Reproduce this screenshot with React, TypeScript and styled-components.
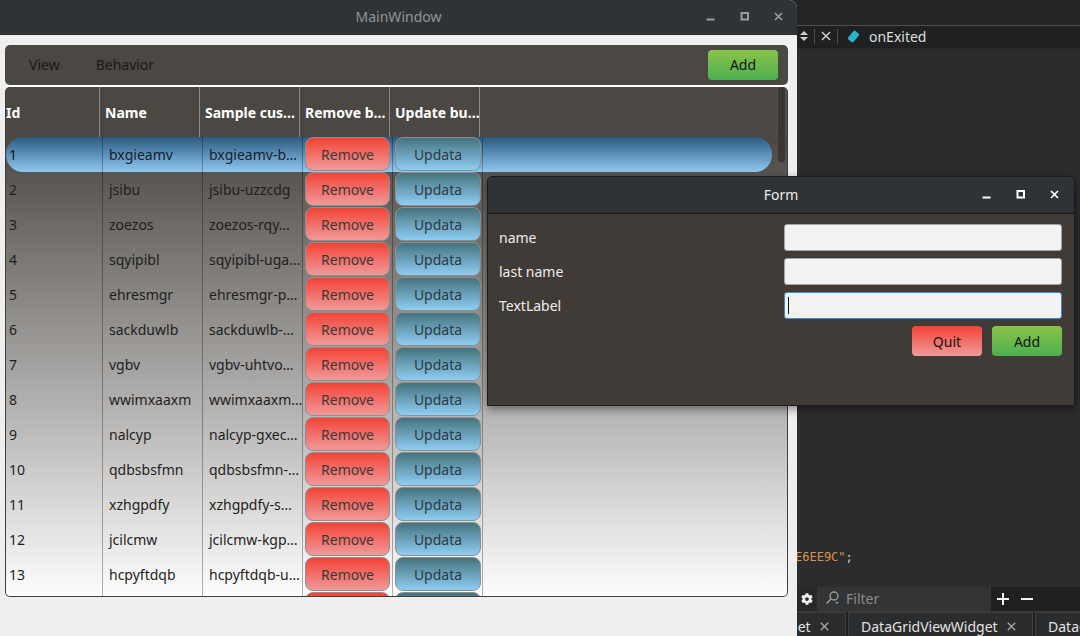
import React from "react";
import styled, { createGlobalStyle } from "styled-components";
import { FaCog } from "react-icons/fa";

const GlobalStyle = createGlobalStyle`
  * { box-sizing: border-box; }
  html, body { margin: 0; padding: 0; background: #232425; }
  body { font-family: "Noto Sans", "DejaVu Sans", sans-serif; font-size: 14px; }
`;

const Desktop = styled.div`
  position: relative;
  display: flex;
  width: 1080px;
  height: 636px;
  overflow: hidden;
  background: #232425;
`;

/* ---------- window chrome ---------- */
const TitleBar = styled.div<{ $h: number; $active?: boolean }>`
  height: ${(p) => p.$h}px;
  flex: none;
  display: grid;
  grid-template-columns: 1fr auto 1fr;
  align-items: center;
  padding-bottom: 1px;
  background: #2f3336;
  color: ${(p) => (p.$active ? "#ececec" : "#909396")};
  border-bottom: 1px solid ${(p) => (p.$active ? "#161819" : "#2a2d2f")};
`;

const TitleText = styled.div`
  grid-column: 2;
  font-size: 14px;
`;

const Controls = styled.div<{ $gap: number; $pr: number }>`
  grid-column: 3;
  justify-self: end;
  display: flex;
  align-items: center;
  gap: ${(p) => p.$gap}px;
  padding-right: ${(p) => p.$pr}px;
  svg {
    display: block;
  }
`;

const WinControls = ({ color, gap, pr }: { color: string; gap: number; pr: number }) => (
  <Controls $gap={gap} $pr={pr}>
    <svg width="9" height="9" viewBox="0 0 9 9">
      <rect x="0.5" y="6.5" width="8" height="2" fill={color} />
    </svg>
    <svg width="9" height="9" viewBox="0 0 9 9">
      <rect x="1.5" y="1" width="6.5" height="6.5" fill="none" stroke={color} strokeWidth="2" />
    </svg>
    <svg width="9" height="9" viewBox="0 0 9 9">
      <path d="M1 1L8 8M8 1L1 8" stroke={color} strokeWidth="1.7" />
    </svg>
  </Controls>
);

/* ---------- main window ---------- */
const MainWindow = styled.div`
  flex: none;
  width: 797px;
  height: 636px;
  display: flex;
  flex-direction: column;
  background: #efefef;
  border-top-right-radius: 8px;
  overflow: hidden;
`;

const MainBody = styled.div`
  flex: 1;
  display: flex;
  flex-direction: column;
  padding: 10px 9px 0 5px;
`;

const ToolBar = styled.div`
  height: 40px;
  flex: none;
  display: flex;
  align-items: center;
  gap: 36px;
  padding: 0 10px 1px 24px;
  background: #4b4743;
  border-radius: 5px;
`;

const MenuItem = styled.span`
  color: #1a1a1a;
  font-size: 14px;
`;

const GradButton = styled.button<{ $kind: "green" | "red" }>`
  width: 70px;
  height: 30px;
  border: none;
  border-radius: 4px;
  font-family: inherit;
  font-size: 14px;
  color: #151515;
  padding: 0;
  background: ${(p) =>
    p.$kind === "green"
      ? "linear-gradient(180deg, #8bc34a 0%, #4caf50 100%)"
      : "linear-gradient(180deg, #f44336 0%, #ef9a9a 100%)"};
`;

const ToolAdd = styled(GradButton)`
  margin-left: auto;
`;

const Divider = styled.div`
  height: 2px;
  flex: none;
  background: #ffffff;
`;

const Table = styled.div`
  position: relative;
  height: 510px;
  flex: none;
  display: flex;
  flex-direction: column;
  background: #55504b;
  border: 1px solid rgba(0, 0, 0, 0.22);
  border-top: none;
  border-radius: 5px;
  overflow: hidden;
`;

const HeaderRow = styled.div`
  height: 50px;
  flex: none;
  display: grid;
  grid-template-columns: 94px 100px 100px 90px 90px 1fr;
  margin-right: 10px;
  background: #4b4743;
  border-bottom-right-radius: 6px;
`;

const HeaderCell = styled.div<{ $pl?: number; $last?: boolean }>`
  display: flex;
  align-items: center;
  padding-left: ${(p) => p.$pl ?? 5}px;
  color: #ffffff;
  font-weight: 700;
  font-size: 14px;
  white-space: nowrap;
  overflow: hidden;
  border-right: ${(p) => (p.$last ? "none" : "1px solid #8d8883")};
`;

const Body = styled.div`
  flex: 1;
  overflow: hidden;
  padding-right: 15px;
  background: linear-gradient(180deg, #4b4743 0%, #fdfdfd 100%);
`;

const Row = styled.div<{ $selected?: boolean }>`
  height: 35px;
  display: grid;
  grid-template-columns: 97px 100px 100px 90px 90px 1fr;
  border-radius: 17px;
  color: ${(p) => (p.$selected ? "#14202b" : "#1e1e1e")};
  background: ${(p) =>
    p.$selected ? "linear-gradient(180deg, #2b5a80 0%, #8fc8f2 100%)" : "transparent"};
`;

const Cell = styled.div<{ $pl?: number; $last?: boolean }>`
  display: flex;
  align-items: center;
  padding-left: ${(p) => p.$pl ?? 6}px;
  white-space: nowrap;
  overflow: hidden;
  font-size: 14px;
  border-right: ${(p) => (p.$last ? "none" : "1px solid rgba(0, 0, 0, 0.3)")};
`;

const ButtonCell = styled(Cell)`
  align-items: flex-start;
  padding-left: 2px;
  overflow: visible;
`;

const RowButton = styled.button<{ $kind: "remove" | "update" }>`
  width: ${(p) => (p.$kind === "remove" ? 85 : 86)}px;
  height: 34px;
  padding: 0;
  border: 1px solid #8f8f8f;
  border-radius: 8px;
  font-family: inherit;
  font-size: 14px;
  color: ${(p) => (p.$kind === "remove" ? "#3a3a3a" : "#2c3a44")};
  background: ${(p) =>
    p.$kind === "remove"
      ? "linear-gradient(180deg, #f44336 0%, #ef9a9a 100%)"
      : "linear-gradient(180deg, #45737d 0%, #8fcdf3 100%)"};
`;

const ScrollIndicator = styled.div`
  position: absolute;
  top: 0;
  right: 2px;
  width: 7px;
  height: 75px;
  border-radius: 3px;
  background: #3a3633;
`;

/* ---------- IDE pane ---------- */
const IdePane = styled.div`
  flex: 1;
  min-width: 0;
  display: flex;
  flex-direction: column;
  background: #2b2c2e;
  color: #dcdcdc;
`;

const IdeTopStrip = styled.div`
  height: 26px;
  flex: none;
  background: #232425;
  border-bottom: 1px solid #4e4f51;
`;

const EditorBar = styled.div`
  height: 23px;
  flex: none;
  display: flex;
  align-items: center;
  gap: 6px;
  padding: 0 0 2px 3px;
  background: #1f2022;
  border-bottom: 1px solid #262729;
  white-space: nowrap;
  svg {
    display: block;
    flex: none;
  }
`;

const BarSep = styled.div`
  width: 1px;
  height: 15px;
  background: #4a4b4d;
`;

const SymbolName = styled.span`
  margin-left: 3px;
  color: #dedede;
  font-size: 14px;
`;

const Editor = styled.div`
  flex: 1;
  display: flex;
  flex-direction: column;
  justify-content: flex-end;
  padding-bottom: 21px;
  overflow: hidden;
`;

const CodeLine = styled.div`
  font-family: "DejaVu Sans Mono", "Liberation Mono", monospace;
  font-size: 12px;
  line-height: 18px;
  white-space: pre;
  color: #cfcfcf;
  margin-left: -2px;
`;

const Str = styled.span`
  color: #d69545;
`;

const FilterBar = styled.div`
  height: 24px;
  flex: none;
  display: flex;
  background: #1f2021;
`;

const GearBox = styled.div`
  width: 20px;
  display: flex;
  align-items: center;
  justify-content: center;
  background: #27282a;
  color: #f0f0f0;
`;

const FilterField = styled.div`
  width: 174px;
  display: flex;
  align-items: center;
  gap: 5px;
  padding: 0 0 2px 8px;
  background: #333436;
  color: #8b8b8b;
  font-size: 14px;
  svg {
    display: block;
  }
`;

const PlusMinus = styled.div`
  display: flex;
  align-items: center;
  gap: 12px;
  padding-left: 6px;
  svg {
    display: block;
  }
`;

const DocTabs = styled.div`
  height: 25px;
  flex: none;
  display: flex;
  gap: 2px;
  background: #1e1f20;
  border-top: 1px solid #37383a;
  overflow: hidden;
`;

const DocTab = styled.div<{ $offset?: number }>`
  flex: none;
  width: 185px;
  margin-left: ${(p) => p.$offset ?? 0}px;
  display: flex;
  align-items: center;
  gap: 9px;
  padding: 3px 0 0 12px;
  background: #2b2c2e;
  border: 1px solid #3e3f41;
  border-bottom: none;
  color: #e2e2e2;
  font-size: 14px;
  white-space: nowrap;
  svg {
    display: block;
  }
`;

/* ---------- form window ---------- */
const FormWindow = styled.div`
  position: absolute;
  left: 487px;
  top: 176px;
  width: 588px;
  height: 230px;
  display: flex;
  flex-direction: column;
  border: 1px solid #1a1b1c;
  border-radius: 5px 5px 0 0;
  overflow: hidden;
  box-shadow: 0 3px 10px rgba(0, 0, 0, 0.45);
`;

const FormBody = styled.div`
  flex: 1;
  display: grid;
  grid-template-columns: 1fr 278px;
  grid-auto-rows: min-content;
  row-gap: 7px;
  align-items: center;
  padding: 10px 12px 0 11px;
  background: #403b37;
`;

const FieldLabel = styled.span`
  color: #ececec;
  font-size: 14px;
`;

const Field = styled.div<{ $focused?: boolean }>`
  height: 27px;
  display: flex;
  align-items: center;
  padding-left: 3px;
  background: #f3f3f3;
  border: 1px solid ${(p) => (p.$focused ? "#3a8bd0" : "#a4a4a4")};
  border-radius: 3px;
`;

const Caret = styled.div`
  width: 1px;
  height: 17px;
  background: #111;
`;

const FormButtons = styled.div`
  grid-column: 1 / -1;
  display: flex;
  justify-content: flex-end;
  gap: 10px;
`;

const rows: [string, string, string][] = [
  ["1", "bxgieamv", "bxgieamv-b…"],
  ["2", "jsibu", "jsibu-uzzcdg"],
  ["3", "zoezos", "zoezos-rqy…"],
  ["4", "sqyipibl", "sqyipibl-uga…"],
  ["5", "ehresmgr", "ehresmgr-p…"],
  ["6", "sackduwlb", "sackduwlb-…"],
  ["7", "vgbv", "vgbv-uhtvo…"],
  ["8", "wwimxaaxm", "wwimxaaxm…"],
  ["9", "nalcyp", "nalcyp-gxec…"],
  ["10", "qdbsbsfmn", "qdbsbsfmn-…"],
  ["11", "xzhgpdfy", "xzhgpdfy-s…"],
  ["12", "jcilcmw", "jcilcmw-kgp…"],
  ["13", "hcpyftdqb", "hcpyftdqb-u…"],
  ["", "", ""],
];

const SmallX = ({ color = "#a8a8a8", size = 9 }: { color?: string; size?: number }) => (
  <svg width={size} height={size} viewBox="0 0 9 9">
    <path d="M0.8 0.8L8.2 8.2M8.2 0.8L0.8 8.2" stroke={color} strokeWidth="1.3" />
  </svg>
);

export default function App() {
  return (
    <>
      <GlobalStyle />
      <Desktop>
        <MainWindow>
          <TitleBar $h={35}>
            <TitleText>MainWindow</TitleText>
            <WinControls color="#9a9da0" gap={25} pr={14} />
          </TitleBar>
          <MainBody>
            <ToolBar>
              <MenuItem>View</MenuItem>
              <MenuItem>Behavior</MenuItem>
              <ToolAdd $kind="green">Add</ToolAdd>
            </ToolBar>
            <Divider />
            <Table>
              <HeaderRow>
                <HeaderCell $pl={0}>Id</HeaderCell>
                <HeaderCell>Name</HeaderCell>
                <HeaderCell>Sample cus…</HeaderCell>
                <HeaderCell>Remove b…</HeaderCell>
                <HeaderCell>Update bu…</HeaderCell>
                <HeaderCell $last />
              </HeaderRow>
              <Body>
                {rows.map(([id, name, sample], i) => (
                  <Row key={i} $selected={i === 0}>
                    <Cell $pl={3}>{id}</Cell>
                    <Cell>{name}</Cell>
                    <Cell>{sample}</Cell>
                    <ButtonCell>
                      <RowButton $kind="remove">{id ? "Remove" : ""}</RowButton>
                    </ButtonCell>
                    <ButtonCell>
                      <RowButton $kind="update">{id ? "Updata" : ""}</RowButton>
                    </ButtonCell>
                    <Cell $last />
                  </Row>
                ))}
              </Body>
              <ScrollIndicator />
            </Table>
          </MainBody>
        </MainWindow>

        <IdePane>
          <IdeTopStrip />
          <EditorBar>
            <svg width="8" height="12" viewBox="0 0 8 12">
              <path d="M0 5L4 1L8 5Z M0 7L4 11L8 7Z" fill="#cfcfcf" />
            </svg>
            <BarSep />
            <SmallX color="#d0d0d0" size={10} />
            <BarSep />
            <svg width="13" height="13" viewBox="0 0 13 13" style={{ marginLeft: 3 }}>
              <rect x="3" y="1" width="7" height="11" rx="1.5" fill="#2bb3cb" transform="rotate(40 6.5 6.5)" />
            </svg>
            <SymbolName>onExited</SymbolName>
          </EditorBar>
          <Editor>
            <CodeLine>
              <Str>E6EE9C"</Str>;
            </CodeLine>
          </Editor>
          <FilterBar>
            <GearBox>
              <FaCog size={12} />
            </GearBox>
            <FilterField>
              <svg width="16" height="14" viewBox="0 0 16 14">
                <circle cx="9" cy="5" r="4" fill="none" stroke="#9a9a9a" strokeWidth="1.4" />
                <path d="M6.2 7.8L1.5 12.5" stroke="#9a9a9a" strokeWidth="1.6" />
                <path d="M10 11L14 11L12 13Z" fill="#9a9a9a" />
              </svg>
              <span>Filter</span>
            </FilterField>
            <PlusMinus>
              <svg width="12" height="12" viewBox="0 0 12 12">
                <path d="M6 0V12M0 6H12" stroke="#f2f2f2" strokeWidth="2" />
              </svg>
              <svg width="12" height="12" viewBox="0 0 12 12">
                <path d="M0 6H12" stroke="#f2f2f2" strokeWidth="2" />
              </svg>
            </PlusMinus>
          </FilterBar>
          <DocTabs>
            <DocTab $offset={-136}>
              <span>DataGridViewWidget</span>
              <SmallX />
            </DocTab>
            <DocTab>
              <span>DataGridViewWidget</span>
              <SmallX />
            </DocTab>
            <DocTab>
              <span>DataGridViewWidget</span>
              <SmallX />
            </DocTab>
          </DocTabs>
        </IdePane>

        <FormWindow>
          <TitleBar $h={37} $active>
            <TitleText>Form</TitleText>
            <WinControls color="#ffffff" gap={25} pr={15} />
          </TitleBar>
          <FormBody>
            <FieldLabel>name</FieldLabel>
            <Field />
            <FieldLabel>last name</FieldLabel>
            <Field />
            <FieldLabel>TextLabel</FieldLabel>
            <Field $focused>
              <Caret />
            </Field>
            <FormButtons>
              <GradButton $kind="red">Quit</GradButton>
              <GradButton $kind="green">Add</GradButton>
            </FormButtons>
          </FormBody>
        </FormWindow>
      </Desktop>
    </>
  );
}
